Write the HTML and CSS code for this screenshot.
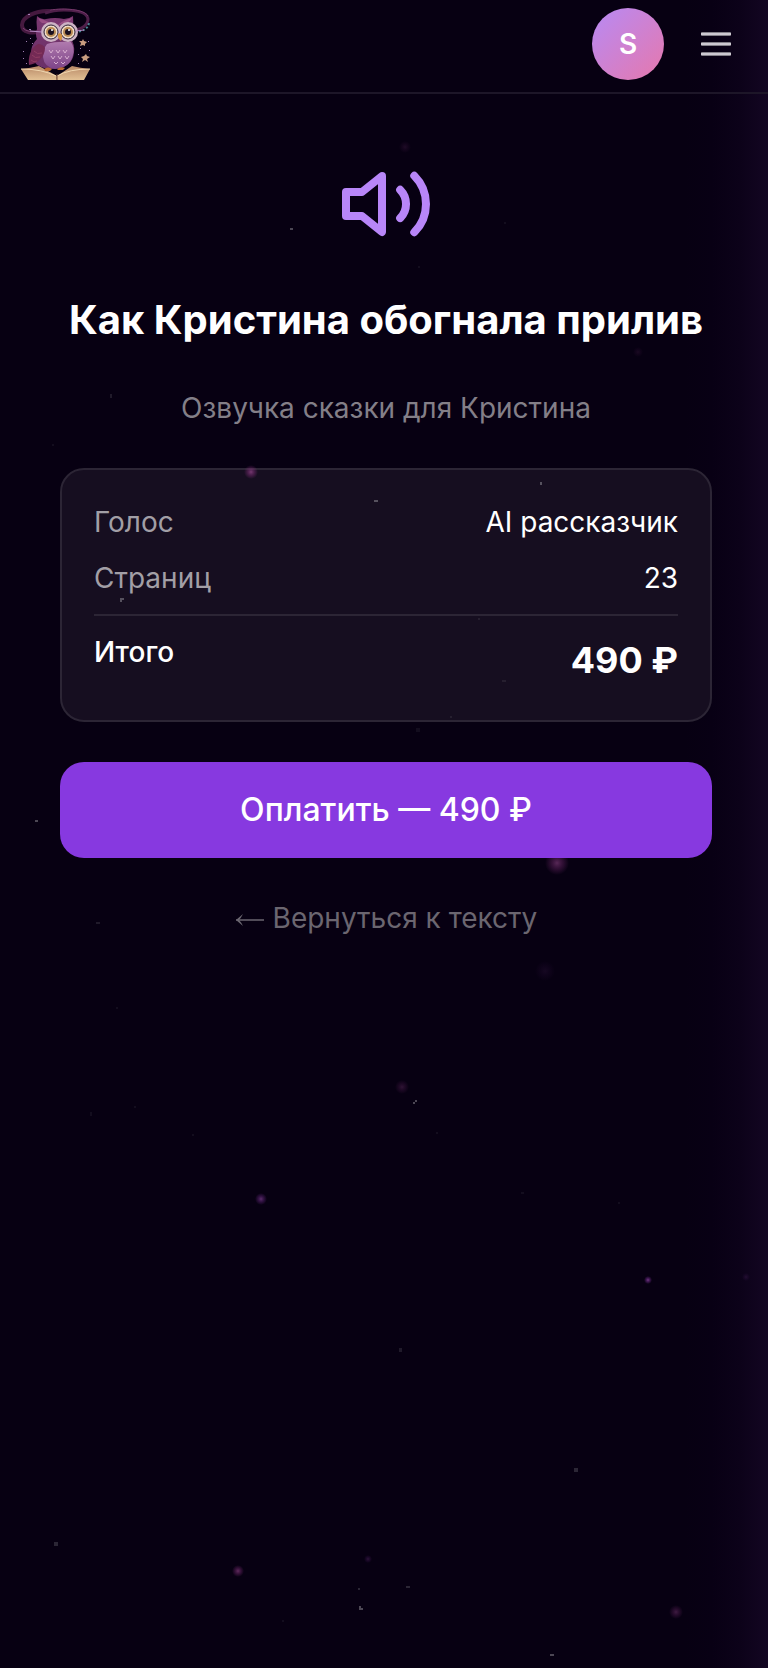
FILE: index.html
```html
<!DOCTYPE html>
<html lang="ru">
<head>
<meta charset="utf-8">
<meta name="viewport" content="width=device-width, initial-scale=1">
<title>Как Кристина обогнала прилив</title>
<link rel="stylesheet" href="styles.css">
</head>
<body>
<div class="page">
  <svg class="stars" aria-hidden="true">
    <defs>
      <radialGradient id="glow"><stop offset="0" stop-color="#a052b4"/><stop offset="0.5" stop-color="#7a2f96" stop-opacity="0.6"/><stop offset="1" stop-color="#7a2f96" stop-opacity="0"/></radialGradient>
      <radialGradient id="glow-pink"><stop offset="0" stop-color="#a8509c"/><stop offset="0.5" stop-color="#8a3080" stop-opacity="0.6"/><stop offset="1" stop-color="#8a3080" stop-opacity="0"/></radialGradient>
    </defs>
    <g fill="url(#glow)">
      <circle cx="545" cy="971" r="10" opacity=".1"/>
      <circle cx="261" cy="1199" r="6" opacity=".55"/>
      <circle cx="648" cy="1280" r="4" opacity=".7"/>
      <circle cx="746" cy="1277" r="4" opacity=".15"/>
      <circle cx="368" cy="1559" r="4" opacity=".25"/>
    </g>
    <g fill="url(#glow-pink)">
      <circle cx="405" cy="147" r="6" opacity=".15"/>
      <circle cx="638" cy="352" r="5" opacity=".12"/>
      <circle cx="557" cy="863" r="12" opacity=".5"/>
      <circle cx="402" cy="1087" r="7" opacity=".25"/>
      <circle cx="238" cy="1571" r="6" opacity=".55"/>
      <circle cx="676" cy="1612" r="7" opacity=".35"/>
    </g>
    <g fill="#fff">
      <path opacity=".28" d="M290 228h3v2h-3zM35 820h3v2h-3zM413 1102h2v2h-2zM415 1100h2v2h-2zM359 1606h2v4h-2zM361 1608h2v2h-2zM550 1654h4v2h-4z"/>
      <path opacity=".15" d="M54 1542h4v4h-4zM574 1468h4v4h-4zM406 1586h4v2h-4zM358 1588h2v2h-2z"/>
      <path opacity=".1" d="M399 1348h3v4h-3zM110 394h2v4h-2zM96 922h4v2h-4z"/>
      <path opacity=".05" d="M504 222h2v2h-2zM418 266h2v2h-2zM52 444h2v2h-2zM416 728h4v4h-4zM116 1007h2v2h-2zM90 1112h2v4h-2zM134 1106h2v2h-2zM192 1134h2v2h-2zM436 1132h2v2h-2zM521 1192h3v2h-3zM618 1202h2v2h-2zM282 1620h2v2h-2z"/>
    </g>
  </svg>

  <header class="header">
    <a class="logo" href="#" aria-label="На главную">
      <svg viewBox="0 0 72 72" width="72" height="72" aria-hidden="true">
        <defs>
          <linearGradient id="body" x1="0" y1="0" x2="0" y2="1"><stop offset="0" stop-color="#7a3770"/><stop offset="1" stop-color="#6a3068"/></linearGradient>
          <linearGradient id="belly" x1="0" y1="0" x2="0" y2="1"><stop offset="0" stop-color="#b07aae"/><stop offset="1" stop-color="#7d4488"/></linearGradient>
          <linearGradient id="paper" x1="0" y1="0" x2="0" y2="1"><stop offset="0" stop-color="#b98a68"/><stop offset="1" stop-color="#e2c094"/></linearGradient>
        </defs>
        <path d="M30 3C16 2 2 9 2 17c0 8 10 9 20 6" fill="none" stroke="#45193f" stroke-width="4"/>
        <path d="M25 5c14-5 42-4 43 6 0 6-6 10-16 12" fill="none" stroke="#4f1f4a" stroke-width="3"/>
        <path d="M30 2c14-2 34-1 38 6" fill="none" stroke="#74386a" stroke-width="1"/>
        <path d="M3 20q4 5 16 3" fill="none" stroke="#7c3d72" stroke-width="1"/>
        <path d="M55 24c8 0 14-4 14-10" fill="none" stroke="#4b8794" stroke-width="2" stroke-dasharray="2 2"/>
        <path d="M1 61q10-1 18-3l18 10-1 4H8z" fill="url(#paper)"/>
        <path d="M70 61q-10-1-18-3L37 68l-1 4h28z" fill="url(#paper)"/>
        <path d="M37 68q12-7 33-7M36 68Q22 61 1 61" fill="none" stroke="#f0d6ae" stroke-width="1"/>
        <path d="M37 66v6" stroke="#6e4233" stroke-width="1"/>
        <path d="M17 8q4 4 9 3 9-2 18 0 5 0 9-3 1 7-1 13 1 5-1 10 4 6 3 13-1 16-22 17-20-1-21-16 0-8 6-14-2-5 0-10-1-7 0-13z" fill="url(#body)"/>
        <path d="M18 10q10 2 17 10 7-8 17-10-2 4-5 5-6-1-12 6-7-7-13-6-3-2-4-5z" fill="#9a4f86"/>
        <path d="M27 36q9-3 24-2 4 6 2 13-3 13-18 14-11-2-12-12 0-8 4-13z" fill="url(#belly)"/>
        <path d="M18 36C10 40 8 50 9 57c8-1 16-8 16-17q-2-4-7-4z" fill="#742a55"/>
        <path d="M14 43q3 4 8 2M12 47q3 4 8 2M11 52q3 3 6 1" fill="none" stroke="#8f3d63" stroke-width="1"/>
        <path d="M29 42l2 3 2-3m3 0 2 3 2-3m3 0 2 3 2-3M31 48l2 3 2-3m3 0 2 3 2-3m3 0 2 3 2-3M34 54l2 2 2-2m3 0 2 2 2-2" fill="none" stroke="#d8aed0" stroke-width="1"/>
        <circle cx="31" cy="24" r="10" fill="#cdb3c5"/><circle cx="48" cy="24" r="10" fill="#cdb3c5"/>
        <circle cx="31" cy="24" r="7" fill="#f0dcc6" stroke="#2c2238" stroke-width="1"/><circle cx="48" cy="24" r="7" fill="#f0dcc6" stroke="#2c2238" stroke-width="1"/>
        <circle cx="31" cy="24" r="5" fill="#b98b55"/><circle cx="48" cy="24" r="5" fill="#b98b55"/>
        <circle cx="31" cy="24" r="3" fill="#1b101e"/><circle cx="48" cy="24" r="3" fill="#1b101e"/>
        <circle cx="32" cy="22" r="1" fill="#fff"/><circle cx="49" cy="22" r="1" fill="#fff"/>
        <path d="M10 23l12 1M56 23l8-1" stroke="#b58bc4" stroke-width="1"/>
        <path d="M40 25q4 2 1 8-4-3-3-7z" fill="#d49140"/>
        <path d="M24 61q4-3 8 0l-2 2h-5zM37 61q4-3 8-1l-2 2h-5z" fill="#b96a34"/>
        <path d="m63 31 1 2 3 1-2 2v2l-2-1-3 1 1-3-2-2h3zM66 46l1 2 3 1-3 2 1 3-3-2-3 2 1-3-2-2 3-1z" fill="#c99d80"/>
        <path d="M8 6h2v1H8zM6 33h1v1H6zM3 43h1v1H3zM6 55h1v1H6zM10 30h1v1h-1zM3 50h1v1H3zM58 46h1v1h-1zM58 55h1v1h-1zM68 33h1v1h-1zM69 42h1v1h-1zM60 40h1v1h-1zM12 35h1v1h-1zM9 21h2v1H9z" fill="#a080b4"/>
      </svg>
    </a>
    <div class="actions">
      <button class="avatar" type="button" aria-label="Профиль">S</button>
      <button class="menu" type="button" aria-label="Меню"><span></span><span></span><span></span></button>
    </div>
  </header>

  <main class="main">
    <svg class="speaker" viewBox="0 0 24 24" width="96" height="96" fill="none" stroke="currentColor" stroke-width="2" stroke-linecap="round" stroke-linejoin="round" aria-hidden="true">
      <path d="M11 5 6 9H2v6h4l5 4V5Z"/><path d="M15.540 8.460a5 5 0 0 1 0 7.070"/><path d="M19.070 4.930a10 10 0 0 1 0 14.140"/>
    </svg>
    <h1 class="title">Как Кристина обогнала прилив</h1>
    <p class="subtitle">Озвучка сказки для Кристина</p>
    <section class="card">
      <dl class="rows">
        <div class="row"><dt>Голос</dt><dd>AI рассказчик</dd></div>
        <div class="row"><dt>Страниц</dt><dd>23</dd></div>
        <div class="row total"><dt>Итого</dt><dd>490 ₽</dd></div>
      </dl>
      <svg class="card-stars" aria-hidden="true">
        <circle cx="189" cy="2" r="7" fill="url(#glow-pink)" opacity=".65"/>
        <path fill="#fff" opacity=".28" d="M312 30h4v2h-4zM478 12h2v3h-2zM58 128h4v2h-4zM58 130h2v2h-2z"/>
        <path fill="#fff" opacity=".07" d="M440 210h4v2h-4zM388 246h2v2h-2zM416 148h2v2h-2z"/>
      </svg>
    </section>
    <button class="pay" type="button">Оплатить — 490 ₽</button>
    <a class="back" href="#"><svg class="arrow" viewBox="0 0 30 14" width="30" height="14" aria-hidden="true"><path d="M1 7h28" fill="none" stroke="currentColor" stroke-width="1.500"/><path d="M1 7 8 1Q6 5 4 7q2 2 4 6z" fill="currentColor"/></svg> Вернуться к тексту</a>
  </main>
</div>
</body>
</html>
```
FILE: styles.css
```css
* { box-sizing: border-box; }

body {
  margin: 0;
  background: #070012;
  color: #fff;
  font-family: Inter, "Liberation Sans", sans-serif;
  font-size: 28px;
  line-height: 40px;
}

button { border: 0; padding: 0; font: inherit; color: inherit; cursor: pointer; }

.page {
  position: relative;
  min-height: 100vh;
  background: linear-gradient(to left, #130622, #0c0219 28px, #080014 56px, #070012 84px);
}

.stars {
  position: absolute;
  inset: 0;
  width: 100%;
  height: 100%;
  pointer-events: none;
}

.header {
  position: relative;
  display: flex;
  align-items: center;
  justify-content: space-between;
  padding: 8px 20px 12px;
  border-bottom: 2px solid #1d1628;
}

.logo { display: block; height: 72px; }
.logo svg { display: block; }

.actions { display: flex; align-items: center; gap: 20px; }

.avatar {
  width: 72px;
  height: 72px;
  border-radius: 50%;
  background: linear-gradient(135deg, #b78af5, #e678ac);
  font-weight: 600;
}

.menu {
  display: flex;
  flex-direction: column;
  align-items: center;
  justify-content: center;
  gap: 6px;
  width: 64px;
  height: 64px;
  background: none;
}

.menu span {
  width: 30px;
  height: 4px;
  border-radius: 1px;
  background: linear-gradient(#837f88 1px, #cdc9d1 1px 3px, #837f88 3px);
}

.main {
  position: relative;
  display: flex;
  flex-direction: column;
  align-items: center;
  padding: 62px 56px 0 60px;
}

.speaker { color: #b886f8; }

.title {
  margin: 40px 0 0;
  font-size: 40px;
  line-height: 56px;
  font-weight: 700;
  text-align: center;
}

.subtitle { margin: 40px 0 0; color: #837f88; text-align: center; }

.card {
  position: relative;
  align-self: stretch;
  margin: 40px 0 0;
  padding: 32px;
  border: 2px solid #2c2535;
  border-radius: 24px;
  background: #160e20;
}

.card-stars {
  position: absolute;
  inset: 0;
  width: 100%;
  height: 100%;
  overflow: visible;
  pointer-events: none;
}

.rows { margin: 0; }
.row { display: flex; justify-content: space-between; margin-bottom: 16px; }
.row dt { color: #a29fa6; }
.row dd { margin: 0; }

.total { margin: 0; padding-top: 16px; border-top: 2px solid #2c2535; }
.total dt { color: #fff; font-weight: 500; }
.total dd { font-size: 36px; line-height: 56px; font-weight: 700; }

.pay {
  align-self: stretch;
  height: 96px;
  margin-top: 40px;
  border-radius: 24px;
  background: #8739e0;
  font-size: 32px;
  font-weight: 500;
}

.back { margin-top: 40px; color: #6b6670; text-decoration: none; }
.arrow { vertical-align: middle; }
```
